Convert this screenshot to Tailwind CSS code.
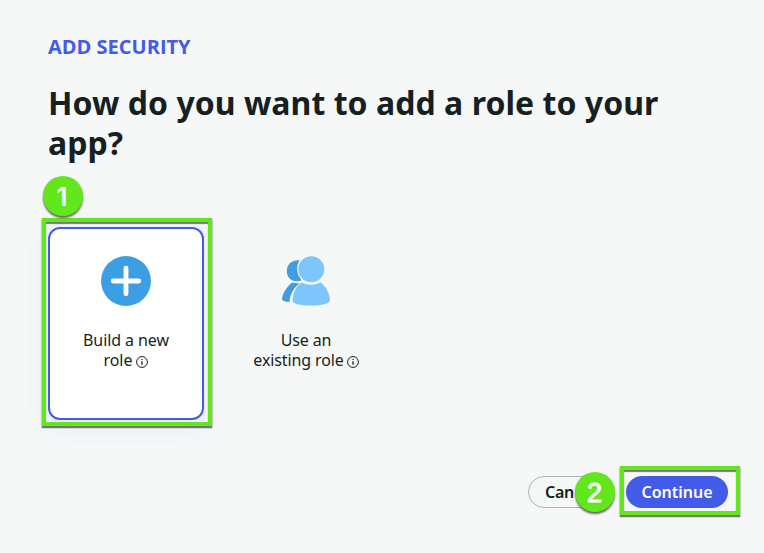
<!DOCTYPE html>
<html lang="en">
<head>
<meta charset="utf-8">
<title>Add security</title>
<script src="https://cdn.jsdelivr.net/npm/@tailwindcss/browser@4"></script>
</head>
<body class="relative w-[764px] h-[553px] overflow-hidden bg-[#f6f8f8] text-[#161f21] font-['Noto_Sans','Open_Sans',sans-serif]">
<main class="flex h-full flex-col pl-12 pr-9 pt-[35px]">
  <p class="font-['Open_Sans',sans-serif] text-[20px] leading-6 font-bold text-[#425be8] whitespace-nowrap"><span>ADD SECURITY</span></p>
  <h1 class="mt-6 text-[32px] leading-10 font-bold tracking-[0.04px] whitespace-nowrap"><span>How do you want to add a role to your</span><br>app?</h1>
  <div class="mt-16 flex gap-6">
    <button class="flex h-[193px] w-[156px] flex-col items-center rounded-xl border-2 border-[#425be8] bg-white pt-[27px] shadow-[0_4px_24px_6px_rgba(66,91,232,0.07)]">
      <svg class="size-[50px]" viewBox="0 0 50 50"><circle cx="25" cy="25" r="25" fill="#3d9fe3"/><path d="M25 12.200v25.600M12.200 25h25.600" stroke="#fff" stroke-width="4.800" stroke-linecap="round"/></svg>
      <span class="mt-6 text-base leading-5 tracking-[-0.08px] text-center whitespace-nowrap">Build a new<br>role <svg class="inline size-3 align-[-2px]" viewBox="0 0 12 12" fill="none" stroke="#161f21"><circle cx="6" cy="6" r="5.400"/><path d="M6 5.200v3.500M6 3v1.100" stroke-width="1.300"/></svg></span>
    </button>
    <button class="flex h-[193px] w-[156px] flex-col items-center pt-[29px]">
      <svg class="size-[50px]" viewBox="0 0 50 50"><path d="M18.5 4.200C10 3.500 5.800 9 5.800 15C5.800 21 10 25.300 15.500 25.300Q18.500 25.500 20.500 24.500Q12.500 14 18.500 4.200zM11.5 26.500C6 29.500 1.500 38 1 43Q1 45.500 8.500 46C9 38 13 31.500 18.500 27.200Q14 27.500 11.500 26.500z" fill="#419ddd"/><circle cx="30.300" cy="13.200" r="13" fill="#7dc5fb"/><path d="M20.500 26.500Q30 31 39.500 26.500C45 30 49 38 49 44.500Q47 49.500 30 49.500Q13 49.500 11.500 45C11.500 38 14.500 30.500 20.500 26.500z" fill="#7dc5fb"/></svg>
      <span class="mt-6 text-base leading-5 tracking-[-0.12px] text-center whitespace-nowrap">Use an<br>existing role <svg class="inline size-3 -ml-px align-[-2px]" viewBox="0 0 12 12" fill="none" stroke="#161f21"><circle cx="6" cy="6" r="5.400"/><path d="M6 5.200v3.500M6 3v1.100" stroke-width="1.300"/></svg></span>
    </button>
  </div>
  <div class="mt-14 flex justify-end gap-3">
    <button class="h-8 w-[86px] rounded-full border border-[#aab1b3] pl-4 text-left text-base leading-[30px] font-semibold tracking-[-0.3px]">Can</button>
    <button class="h-8 w-[102px] rounded-full bg-[#425be8] text-base leading-8 font-semibold text-white">Continue</button>
  </div>
</main>
<div class="absolute left-[42px] top-[218px] h-[208px] w-[170px] border-4 border-[#62e61c] shadow-[0_2px_1px_#777,inset_0_2px_1px_#777,0_1px_2px_#999]"></div>
<div class="absolute left-[620px] top-[466px] h-[49px] w-[120px] border-4 border-[#62e61c] shadow-[0_2px_1px_#777,inset_0_2px_1px_#777,0_1px_2px_#999]"></div>
<div class="absolute left-[43px] top-[176px] flex size-10 items-center justify-center rounded-full bg-[#62e61c] pt-px pr-[2px] text-[26px] font-semibold text-white shadow-[0_2px_2px_#666] font-['Inter',sans-serif]">1</div>
<div class="absolute left-[575px] top-[472px] flex size-10 items-center justify-center rounded-full bg-[#62e61c] pt-[2px] pr-px text-[27px] text-white shadow-[0_2px_2px_#666] font-['Liberation_Sans',sans-serif] [-webkit-text-stroke:1px_white]">2</div>
</body>
</html>
